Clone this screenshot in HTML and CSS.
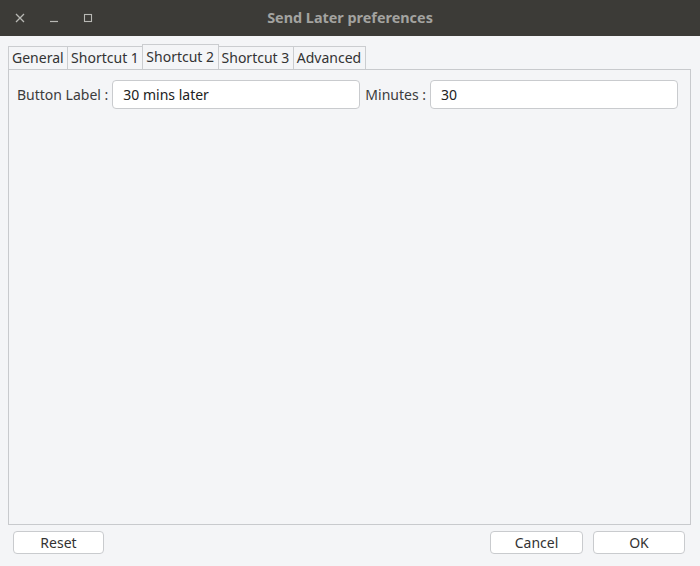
FILE: index.html
```html
<!DOCTYPE html>
<html>
<head>
<meta charset="utf-8">
<link rel="stylesheet" href="styles.css">
</head>
<body>
<div class="window">
  <div class="titlebar">
    <div class="controls">
      <span class="ctl"><svg width="12" height="12" viewBox="0 0 12 12"><path d="M2 2L10 10M10 2L2 10" stroke="#b8b8b4" stroke-width="1.3"/></svg></span>
      <span class="ctl"><svg width="12" height="12" viewBox="0 0 12 12"><path d="M2 9.5H10" stroke="#b8b8b4" stroke-width="1.2"/></svg></span>
      <span class="ctl"><svg width="12" height="12" viewBox="0 0 12 12"><rect x="2.5" y="2.5" width="7" height="7" fill="none" stroke="#b8b8b4" stroke-width="1.1"/></svg></span>
    </div>
    <div class="title">Send Later preferences</div>
  </div>
  <div class="content">
    <div class="tabs">
      <div class="tab">General</div>
      <div class="tab">Shortcut 1</div>
      <div class="tab active">Shortcut 2</div>
      <div class="tab">Shortcut 3</div>
      <div class="tab">Advanced</div>
    </div>
    <div class="panel">
      <div class="row">
        <label class="lbl">Button Label :</label>
        <div class="input wide">30 mins later</div>
        <label class="lbl">Minutes :</label>
        <div class="input wide">30</div>
      </div>
    </div>
    <div class="buttons">
      <button class="btn reset">Reset</button>
      <div class="spacer"></div>
      <button class="btn">Cancel</button>
      <button class="btn ok">OK</button>
    </div>
  </div>
</div>
</body>
</html>
```
FILE: styles.css
```css
* { box-sizing: border-box; }
html, body { margin: 0; padding: 0; }
body {
  width: 700px;
  height: 566px;
  font-family: "Noto Sans", "DejaVu Sans", sans-serif;
  font-size: 14px;
  color: #3c3c3c;
  background: #f4f5f7;
  overflow: hidden;
}
.window { width: 700px; height: 566px; display: flex; flex-direction: column; }
.titlebar {
  height: 36px;
  background: #3c3b37;
  position: relative;
  display: flex;
  align-items: center;
}
.controls { display: flex; padding-left: 14px; gap: 22px; }
.ctl { width: 12px; height: 12px; display: flex; }
.title {
  position: absolute;
  left: 0; right: 0; top: 0;
  line-height: 36px;
  text-align: center;
  color: #a3a3a0;
  font-weight: bold;
  font-size: 14.4px;
}
.content {
  flex: 1;
  display: flex;
  flex-direction: column;
  padding: 8px 9px 0 8px;
}
.tabs { display: flex; height: 25px; align-items: flex-end; }
.tab {
  height: 23px;
  padding: 0 3.5px 0 3px;
  border: 1px solid #cbcdd0;
  border-bottom: none;
  margin-right: -1px;
  line-height: 22px;
  color: #333;
  background: #f4f5f7;
}
.tab.active { height: 25px; line-height: 24px; position: relative; z-index: 1; }
.panel {
  height: 456px;
  border: 1px solid #c8cacd;
  padding: 10px 12px 0 8px;
}
.row { display: flex; align-items: center; height: 29px; }
.lbl { margin-right: 4px; color: #3c3c3c; }
.input {
  height: 29px;
  border: 1px solid #c9cbce;
  border-radius: 4px;
  background: #fff;
  padding: 0 10px;
  line-height: 27px;
  color: #222;
  flex: 1;
  margin-right: 5px;
}
.input:last-child { margin-right: 0; }
.buttons { display: flex; padding: 6px 6px 0 5px; }
.spacer { flex: 1; }
.btn {
  width: 93px;
  height: 23px;
  border: 1px solid #c9cbce;
  border-radius: 4px;
  background: #fff;
  font-family: inherit;
  font-size: 14px;
  color: #333;
  padding: 0;
  margin-left: 10px;
}
.btn.ok { width: 92px; }
.btn.reset { width: 91px; margin-left: 0; }
```
